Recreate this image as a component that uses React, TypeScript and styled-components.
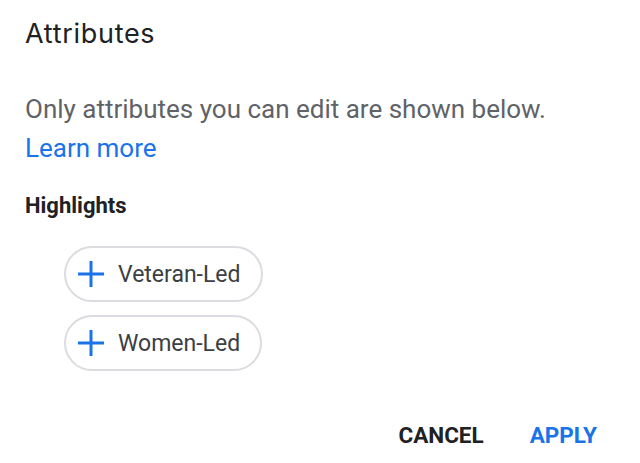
import React from "react";
import styled, { createGlobalStyle } from "styled-components";

const Global = createGlobalStyle`
  html, body { margin: 0; padding: 0; background: #ffffff; }
  body { font-family: Roboto, "Noto Sans", Arial, sans-serif; -webkit-font-smoothing: antialiased; }
`;

const Dialog = styled.div`
  width: 640px;
  height: 463px;
  box-sizing: border-box;
  padding: 18px 43px 0 25px;
  display: flex;
  flex-direction: column;
  background: #fff;
`;

const Title = styled.h1`
  margin: 0;
  font-family: Inter, Roboto, sans-serif;
  font-weight: 400;
  font-size: 27px;
  letter-spacing: 0.7px;
  line-height: 32px;
  color: #202124;
`;

const Description = styled.p`
  margin: 40px 0 0;
  font-size: 26px;
  line-height: 39px;
  color: #5f6368;
`;

const Link = styled.a`
  color: #1a73e8;
  text-decoration: none;
`;

const SectionTitle = styled.h2`
  margin: 25px 0 0;
  font-size: 22px;
  font-weight: 700;
  line-height: 26px;
  color: #202124;
`;

const ChipList = styled.div`
  display: flex;
  flex-direction: column;
  align-items: flex-start;
  gap: 13px;
  margin: 27px 0 0 39px;
`;

const Chip = styled.button`
  display: inline-flex;
  align-items: center;
  gap: 14px;
  height: 56px;
  box-sizing: border-box;
  padding: 0 20px 0 12px;
  border: 2px solid #dadce0;
  border-radius: 28px;
  background: #fff;
  font-family: Roboto, sans-serif;
  font-size: 23px;
  color: #3c4043;
  cursor: pointer;
`;

const Actions = styled.div`
  margin-top: auto;
  margin-bottom: 14px;
  display: flex;
  justify-content: flex-end;
  gap: 46px;
`;

const ActionButton = styled.button<{ $primary?: boolean }>`
  border: none;
  background: none;
  padding: 0;
  font-family: Roboto, sans-serif;
  font-size: 22.5px;
  font-weight: 700;
  line-height: 28px;
  color: ${(p) => (p.$primary ? "#1a73e8" : "#202124")};
  cursor: pointer;
`;

const PlusIcon = () => (
  <svg width="26" height="26" viewBox="0 0 26 26" aria-hidden>
    <path d="M13 0v26M0 13h26" stroke="#1a73e8" strokeWidth="3" fill="none" />
  </svg>
);

export default function App() {
  return (
    <>
      <Global />
      <Dialog>
        <Title>Attributes</Title>
        <Description>
          Only attributes you can edit are shown below.
          <br />
          <Link href="#">Learn more</Link>
        </Description>
        <SectionTitle>Highlights</SectionTitle>
        <ChipList>
          <Chip>
            <PlusIcon />
            Veteran-Led
          </Chip>
          <Chip>
            <PlusIcon />
            Women-Led
          </Chip>
        </ChipList>
        <Actions>
          <ActionButton>CANCEL</ActionButton>
          <ActionButton $primary>APPLY</ActionButton>
        </Actions>
      </Dialog>
    </>
  );
}
